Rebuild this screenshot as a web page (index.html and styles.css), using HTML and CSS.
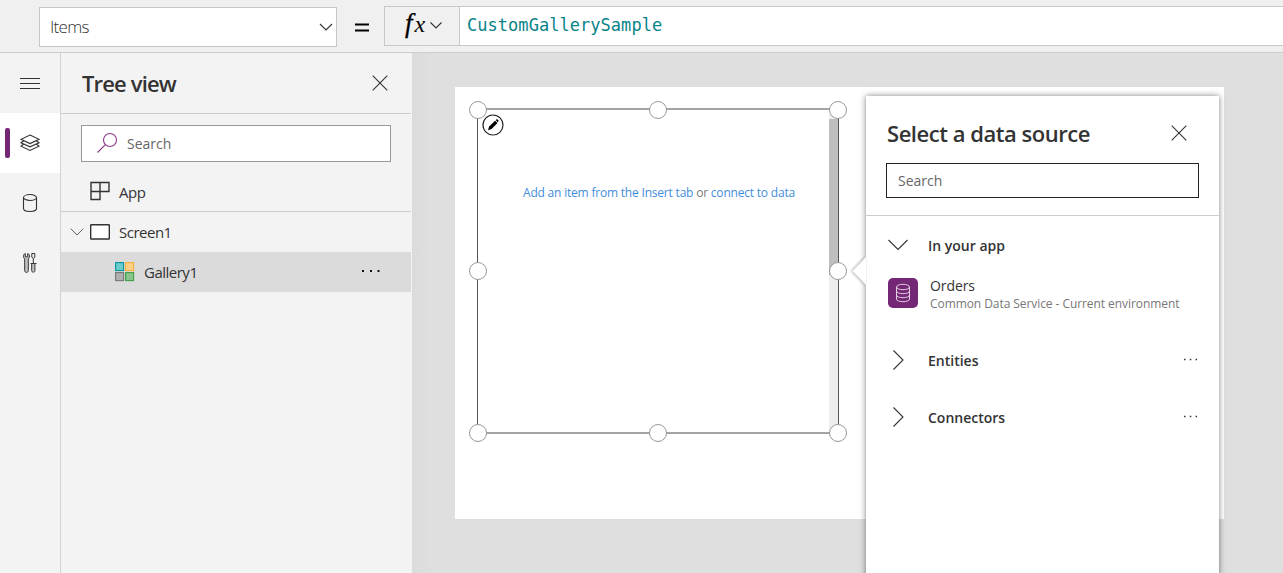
FILE: index.html
```html
<!DOCTYPE html>
<html lang="en">
<head>
<meta charset="utf-8">
<title>Gallery editor</title>
<link rel="stylesheet" href="styles.css">
</head>
<body>
<div class="app">
  <header class="formula-bar">
    <div class="property-select"><span class="t-items">Items</span>
      <svg width="14" height="8" viewBox="0 0 14 8"><path d="M1 1l6 6 6-6"/></svg>
    </div>
    <svg class="equals" width="14" height="10" viewBox="0 0 14 10"><path d="M0 1.500h14M0 7.500h14"/></svg>
    <div class="fx"><span class="fx-glyph">f<span class="fx-x">x</span></span>
      <svg width="12" height="7" viewBox="0 0 12 7"><path d="M.5.5L6 6 11.500.5"/></svg>
    </div>
    <div class="formula"><span>CustomGallerySample</span></div>
  </header>
  <div class="body">
    <nav class="rail">
      <div class="rail-item menu"><svg width="20" height="12" viewBox="0 0 20 12"><path d="M0 .5h20M0 5.500h20M0 10.500h20"/></svg></div>
      <div class="rail-item active"><svg width="20" height="18" viewBox="0 0 20 18"><path d="M10 1l9 4.300-9 4.300-9-4.300zM3.500 7L1 8.800l9 4 9-4L16.500 7M3.500 10.300L1 12.200l9 4.300 9-4.300-2.500-1.900"/></svg></div>
      <div class="rail-item"><svg width="16" height="20" viewBox="0 0 16 20"><path d="M1.500 4.500v11c0 4 13 4 13 0v-11"/><ellipse cx="8" cy="4.500" rx="6.500" ry="3"/></svg></div>
      <div class="rail-item tools"><svg width="14" height="22" viewBox="0 0 14 22"><path d="M2.300 1.500c-2.500 1-2.300 4.300-.6 5.300v11.700c0 2.600 3.600 2.600 3.600 0V6.800c1.700-1 1.900-4.300-.6-5.300v3.300H2.300z" fill="#c4c4c4"/><path d="M8.800 1.500h3v3.700l-1.500 1.300-1.500-1.300zM10.300 6.500v5M7.500 11.500h6"/><path d="M8.700 11.500h3.200v7c0 2.300-3.200 2.300-3.200 0z" fill="#c4c4c4"/></svg></div>
    </nav>
    <aside class="tree">
      <div class="tree-head"><h2 class="t-tree">Tree view</h2>
        <svg width="16" height="16" viewBox="0 0 16 16"><path d="M.7.7l14.600 14.600M15.300.7L.7 15.300"/></svg>
      </div>
      <div class="tree-search">
        <svg width="22" height="22" viewBox="0 0 22 22"><circle cx="14" cy="8" r="6.500"/><path d="M9.300 12.600L1.500 20.500"/></svg>
        <span class="t-search">Search</span>
      </div>
      <div class="row app-row">
        <svg width="20" height="20" viewBox="0 0 20 20"><path d="M1 1.500h18v9H1zM10 1.500v17H1v-17"/></svg>
        <span class="t-app">App</span>
      </div>
      <div class="row screen-row">
        <svg class="twisty" width="14" height="8" viewBox="0 0 14 8"><path d="M.7.7L7 7 13.300.7"/></svg>
        <svg width="20" height="16" viewBox="0 0 20 16"><rect x=".700" y=".700" width="18.600" height="14.300" rx=".5" fill="#fff"/></svg>
        <span class="t-screen">Screen1</span>
      </div>
      <div class="row gallery-row">
        <svg width="20" height="20" viewBox="0 0 20 20"><rect x=".6" y=".6" width="8" height="8" fill="#69cccc" stroke="#079499"/><rect x="10.600" y=".6" width="8" height="8" fill="#fdd086" stroke="#fbb13c"/><rect x=".6" y="10.600" width="8" height="8" fill="#b0b0b0" stroke="#777"/><rect x="10.600" y="10.600" width="8" height="8" fill="#88c48b" stroke="#3f9f45"/></svg>
        <span class="t-gallery">Gallery1</span>
        <svg class="more" width="20" height="4" viewBox="0 0 20 4"><path d="M1 1h2v2H1zM9 1h2v2H9zM16.500 1h2v2h-2z"/></svg>
      </div>
    </aside>
    <main class="stage">
      <div class="screen">
        <div class="gallery">
          <div class="scroll"><div class="thumb"></div></div>
          <p class="hint"><a>Add an item from the Insert tab</a> or <a>connect to data</a></p>
          <i class="handle tl"></i><i class="handle tc"></i><i class="handle tr"></i>
          <i class="handle ml"></i><i class="handle mr"></i>
          <i class="handle bl"></i><i class="handle bc"></i><i class="handle br"></i>
          <svg class="edit" width="22" height="22" viewBox="0 0 22 22"><circle cx="11" cy="11" r="10" fill="#fff" stroke="#222" stroke-width="1.200"/><path d="M6 16.200l1.100-3.600 6-5.900 2.400 2.400-6 6zM13.700 6.100l.9-.8c.5-.4 2.400 1.400 1.900 2l-.8.9z" fill="#000" stroke="none"/></svg>
        </div>
      </div>
      <section class="flyout">
        <svg class="tip" width="18" height="32" viewBox="0 0 18 32"><path d="M15 2L1.500 16 15 30" fill="#fff" stroke="none"/></svg>
        <div class="fly-head"><h2 class="t-title">Select a data source</h2>
          <svg width="16" height="16" viewBox="0 0 16 16"><path d="M.7.7l14.600 14.600M15.300.7L.7 15.300"/></svg>
        </div>
        <div class="fly-search"><span class="t-search">Search</span></div>
        <div class="group first"><svg width="20" height="12" viewBox="0 0 20 12"><path d="M.5 1L10 10.500 19.500 1"/></svg><span class="t-group">In your app</span></div>
        <div class="source">
          <div class="source-icon"><svg width="16" height="20" viewBox="0 0 16 20"><ellipse cx="8" cy="4" rx="6.500" ry="2.700"/><path d="M1.500 4v12c0 3.600 13 3.600 13 0V4M1.500 8c0 3.600 13 3.600 13 0M1.500 12c0 3.600 13 3.600 13 0"/></svg></div>
          <div class="source-text"><span class="t-orders">Orders</span><span class="t-cds">Common Data Service - Current environment</span></div>
        </div>
        <div class="group"><svg width="20" height="20" viewBox="0 0 20 20"><path d="M5.500.5L15 10l-9.500 9.500"/></svg><span class="t-group">Entities</span>
          <svg class="dots" width="16" height="3" viewBox="0 0 16 3"><path d="M1 .8h1.500v1.500H1zM6.800.8h1.500v1.500H6.800zM12.600.8h1.500v1.500h-1.500z"/></svg></div>
        <div class="group"><svg width="20" height="20" viewBox="0 0 20 20"><path d="M5.500.5L15 10l-9.500 9.500"/></svg><span class="t-group">Connectors</span>
          <svg class="dots" width="16" height="3" viewBox="0 0 16 3"><path d="M1 .8h1.500v1.500H1zM6.800.8h1.500v1.500H6.800zM12.600.8h1.500v1.500h-1.500z"/></svg></div>
      </section>
    </main>
  </div>
</div>
</body>
</html>
```
FILE: styles.css
```css
* { box-sizing: border-box; }
body { margin: 0; font-family: "Open Sans", "Noto Sans", sans-serif; font-size: 14px; color: #333; }
svg { display: block; flex: none; fill: none; stroke: #333; stroke-width: 1.1; }
h2, p { margin: 0; }
span, h2, p { white-space: nowrap; }
.app { width: 1283px; height: 573px; overflow: hidden; display: flex; flex-direction: column; background: #f3f3f3; }

.formula-bar { height: 53px; flex: none; display: flex; align-items: flex-start; background: #f0f0f0; border-bottom: 1px solid #cdcdcd; padding: 6px 0 0 39px; }
.property-select { width: 298px; height: 40px; margin-top: 1px; display: flex; align-items: center; justify-content: space-between; padding: 0 3px 0 10px; background: #fff; border: 1px solid #c6c6c6; }
.equals { margin: 17px 15px 0 18px; stroke: #000; stroke-width: 2; }
.fx { width: 75px; height: 40px; display: flex; align-items: center; justify-content: space-between; padding: 0 17px 0 20px; border: 1px solid #c8c8c8; border-right: 0; }
.fx svg { margin-top: -1px; }
.fx-glyph { margin-top: -5px; font: italic 27px/36px "Liberation Serif", serif; color: #000; -webkit-text-stroke: .3px #000; }
.fx-x { margin-left: 2px; font-size: 24px; -webkit-text-stroke: 0; }
.formula { flex: 1; height: 40px; padding-left: 7px; border: 1px solid #c8c8c8; border-right: 0; background: #fff; font: 17px/37px "DejaVu Sans Mono", monospace; letter-spacing: .04px; color: #078489; }

.body { flex: 1; min-height: 0; display: flex; }
.rail { width: 61px; flex: none; border-right: 1px solid #d2d2d2; }
.rail-item { height: 60px; display: flex; align-items: center; justify-content: center; }
.rail-item.menu { padding-top: 2px; }
.rail-item.menu svg { stroke-width: 1; }
.rail-item.tools svg { stroke-width: 1; }
.rail-item.active { position: relative; background: #fff; }
.rail-item.active::before { content: ""; position: absolute; left: 5px; top: 15px; width: 5px; height: 30px; border-radius: 2px; background: #742774; }

.tree { width: 351px; flex: none; display: flex; flex-direction: column; padding-right: 1px; }
.tree-head { height: 61px; flex: none; display: flex; align-items: center; justify-content: space-between; padding: 0 23px 0 21px; border-bottom: 1px solid #cdcdcd; }
.tree-search { height: 37px; flex: none; margin: 11px 20px 0; display: flex; align-items: center; gap: 9px; padding-left: 14px; border: 1px solid #999; background: #fff; color: #666; }
.tree-search svg { margin-top: -2px; stroke: #8b3a8b; }
.tree-search span { margin-top: -1px; }
.row { height: 40px; flex: none; display: flex; align-items: center; }
.app-row { height: 50px; padding: 10px 0 0 29px; gap: 9px; border-bottom: 1px solid #cdcdcd; }
.app-row svg { stroke-width: 1.4; margin-top: -1px; }
.screen-row { padding-left: 9px; gap: 9px; }
.screen-row .twisty { margin-right: -3px; stroke: #666; }
.screen-row svg { stroke-width: 1.400; }
.screen-row .twisty { stroke-width: 1; }
.gallery-row { padding-left: 54px; gap: 9px; background: #dbdbdb; }
.more { margin: -2px 30px 0 auto; fill: #111; stroke: none; }

.stage { flex: 1; position: relative; overflow: hidden; background: linear-gradient(90deg, #dbdbdb, #dfdfdf 18px); padding: 34px 0 0 43px; }
.screen { width: 769px; height: 432px; background: #fff; padding: 21px 0 0 22px; }
.gallery { position: relative; width: 362px; height: 326px; border: 1px solid #555; border-width: 2px 1px; border-top-color: #a3a3a3; border-bottom-color: #a3a3a3; }
.scroll { position: absolute; right: 0; top: 4px; bottom: 0; width: 9px; padding-top: 5px; background: #eee; }
.thumb { height: 156px; background: #bfbfbf; }
.hint { padding-top: 74px; padding-left: 45px; font-size: 12px; line-height: 18px; color: #777; letter-spacing: -.2px; }
.hint a { color: #3f8ddc; }
.handle { position: absolute; width: 18px; height: 18px; border: 1.500px solid #999; border-radius: 50%; background: #fff; }
.tl, .ml, .bl { left: -9px; }
.tc, .bc { left: 171px; }
.tr, .mr, .br { left: 351px; }
.tl, .tc, .tr { top: -9px; }
.ml, .mr { top: 152px; }
.bl, .bc, .br { top: 314px; }
.edit { position: absolute; left: 4px; top: 4px; }

.flyout { position: absolute; left: 454px; top: 43px; width: 353px; height: 500px; background: #fff; box-shadow: 0 0 6px rgba(0,0,0,.5); }
.tip { position: absolute; left: -15px; top: 159px; filter: drop-shadow(-1px 0 1.500px rgba(0,0,0,.35)); clip-path: inset(-4px 2px -4px -8px); }
.fly-head { height: 67px; display: flex; align-items: center; justify-content: space-between; padding: 7px 32px 0 21px; }
.fly-head svg { margin-top: -1px; }
.fly-search { height: 35px; margin: 0 20px 17px; display: flex; align-items: center; padding-left: 11px; border: 1px solid #222; color: #666; }
.group { height: 57px; display: flex; align-items: center; gap: 20px; padding: 0 20px 0 22px; font-weight: 600; }
.group.first { height: 59px; border-top: 1px solid #cdcdcd; }
.group:not(.first) > svg:first-child { margin-top: -2px; }
.dots { margin: -2px 0 0 auto; fill: #333; stroke: none; }
.source { display: flex; gap: 12px; height: 58px; padding: 4px 0 0 22px; }
.source-icon { width: 30px; height: 30px; display: grid; place-items: center; border-radius: 5px; background: #742774; }
.source-icon svg { stroke: #e2cde2; stroke-width: 1; }
.source-text { display: flex; flex-direction: column; margin-top: -2px; }

.t-items { margin-top: -2px; font-size: 17px; font-weight: 300; letter-spacing: -.7px; }
.t-tree { font-size: 22px; font-weight: 600; letter-spacing: -.85px; }
.t-title { font-size: 22px; font-weight: 600; letter-spacing: -.47px; }
.t-search { font-size: 14px; }
.t-app, .t-screen, .t-gallery { font-size: 15px; letter-spacing: -.5px; }
.t-group { font-size: 14px; }
.t-orders { font-size: 14px; line-height: 19px; letter-spacing: -.1px; }
.t-cds { font-size: 12px; line-height: 17px; letter-spacing: -.07px; color: #777; }
```
